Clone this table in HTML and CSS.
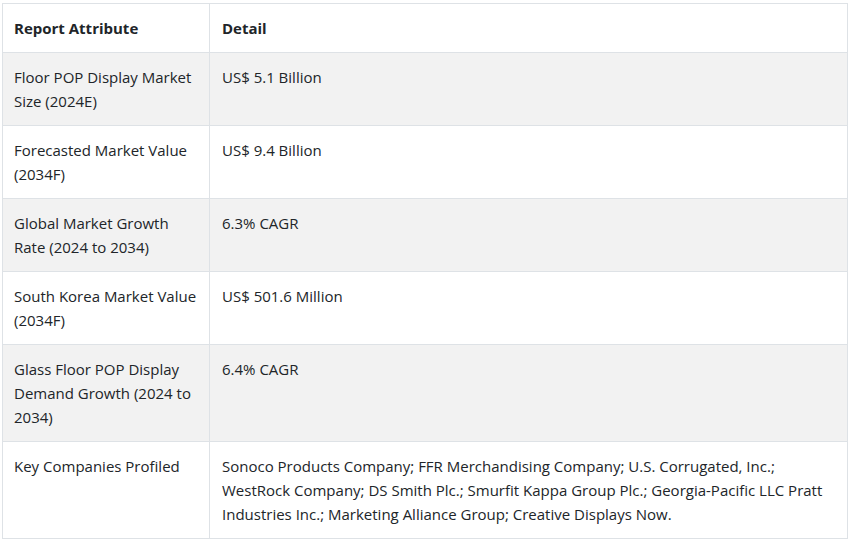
FILE: index.html
```html
<!DOCTYPE html>
<html>
<head>
<meta charset="utf-8">
<link rel="stylesheet" href="styles.css">
</head>
<body>
<table class="report">
  <thead>
    <tr><th class="c1">Report Attribute</th><th>Detail</th></tr>
  </thead>
  <tbody>
    <tr class="alt"><td>Floor POP Display Market Size (2024E)</td><td>US$ 5.1 Billion</td></tr>
    <tr><td>Forecasted Market Value (2034F)</td><td>US$ 9.4 Billion</td></tr>
    <tr class="alt"><td>Global Market Growth Rate (2024 to 2034)</td><td>6.3% CAGR</td></tr>
    <tr><td>South Korea Market Value (2034F)</td><td>US$ 501.6 Million</td></tr>
    <tr class="alt"><td>Glass Floor POP Display Demand Growth (2024 to 2034)</td><td>6.4% CAGR</td></tr>
    <tr><td>Key Companies Profiled</td><td>Sonoco Products Company; FFR Merchandising Company; U.S. Corrugated, Inc.; WestRock Company; DS Smith Plc.; Smurfit Kappa Group Plc.; Georgia-Pacific LLC Pratt Industries Inc.; Marketing Alliance Group; Creative Displays Now.</td></tr>
  </tbody>
</table>
</body>
</html>
```
FILE: styles.css
```css
html, body {
  margin: 0;
  padding: 0;
  background: #ffffff;
}
body {
  padding: 3px 2px 0 2px;
  font-family: "Open Sans", "Noto Sans", sans-serif;
  font-size: 15px;
  color: #212529;
}
.report {
  width: 846px;
  border-collapse: collapse;
  table-layout: fixed;
}
.report th,
.report td {
  border: 1px solid #dee2e6;
  padding: 12px 11px 12px 11px;
  line-height: 24px;
  text-align: left;
  vertical-align: top;
}
.report th + th,
.report td + td {
  padding-left: 12px;
}
.report th {
  font-weight: 700;
  color: #212529;
}
.report .c1 {
  width: 184px;
}
.report tr.alt td {
  background: #f2f2f2;
}
```
